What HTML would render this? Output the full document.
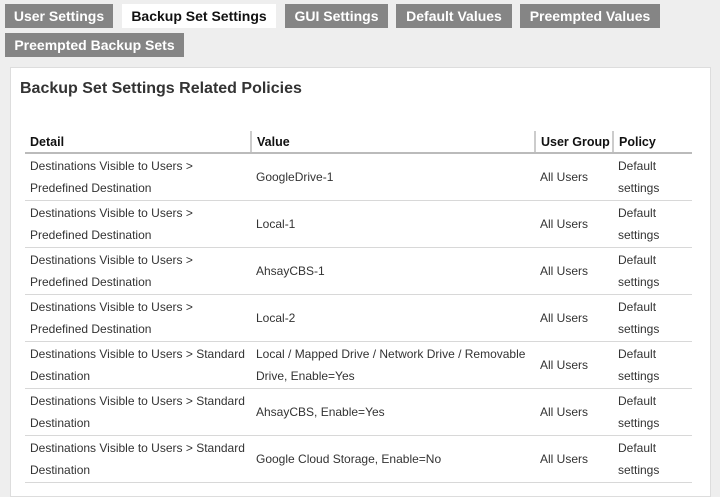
<!DOCTYPE html><html><head><style>
body{margin:0;width:720px;height:485px;overflow:hidden;background:#eee;font-family:"Liberation Sans",Arial,sans-serif;position:relative}
.t{position:absolute;height:24px;line-height:24px;background:#858585;color:#fff;font-weight:bold;font-size:14px;text-align:center}
.t.a{background:#fff;color:#111}
.p{position:absolute;left:10px;top:67px;width:701px;height:430px;background:#fff;border:1px solid #ddd;box-sizing:border-box}
h1{position:absolute;left:20px;top:80px;margin:0;font-size:16px;color:#333}
table{position:absolute;left:25px;top:131px;width:667px;border-collapse:collapse;font-size:12px;color:#333;table-layout:fixed}
th{text-align:left;font-size:12.5px;color:#111;height:21px;padding:0 5px;border-bottom:2px solid #bbb;vertical-align:middle;white-space:nowrap;line-height:14px}
th+th{border-left:2px solid #ccc}
td{height:46px;padding:0 5px;line-height:22px;border-bottom:1px solid #d8d8d8;vertical-align:middle;box-sizing:border-box}
tr.r{height:47px}
</style></head><body>
<div class="t" style="left:5px;top:4px;width:108px">User Settings</div>
<div class="t a" style="left:122px;top:4px;width:154px">Backup Set Settings</div>
<div class="t" style="left:285px;top:4px;width:103px">GUI Settings</div>
<div class="t" style="left:396px;top:4px;width:116px">Default Values</div>
<div class="t" style="left:520px;top:4px;width:140px">Preempted Values</div>
<div class="t" style="left:5px;top:33px;width:179px">Preempted Backup Sets</div>
<div class="p"></div>
<h1>Backup Set Settings Related Policies</h1>
<table>
<colgroup><col style="width:226px"><col style="width:284px"><col style="width:78px"><col style="width:79px"></colgroup>
<tr><th>Detail</th><th>Value</th><th>User Group</th><th>Policy</th></tr>
<tr class="r"><td>Destinations Visible to Users &gt;<br>Predefined Destination</td><td>GoogleDrive-1</td><td>All Users</td><td>Default<br>settings</td></tr>
<tr class="r"><td>Destinations Visible to Users &gt;<br>Predefined Destination</td><td>Local-1</td><td>All Users</td><td>Default<br>settings</td></tr>
<tr class="r"><td>Destinations Visible to Users &gt;<br>Predefined Destination</td><td>AhsayCBS-1</td><td>All Users</td><td>Default<br>settings</td></tr>
<tr class="r"><td>Destinations Visible to Users &gt;<br>Predefined Destination</td><td>Local-2</td><td>All Users</td><td>Default<br>settings</td></tr>
<tr class="r"><td>Destinations Visible to Users &gt; Standard<br>Destination</td><td>Local / Mapped Drive / Network Drive / Removable<br>Drive, Enable=Yes</td><td>All Users</td><td>Default<br>settings</td></tr>
<tr class="r"><td>Destinations Visible to Users &gt; Standard<br>Destination</td><td>AhsayCBS, Enable=Yes</td><td>All Users</td><td>Default<br>settings</td></tr>
<tr class="r"><td>Destinations Visible to Users &gt; Standard<br>Destination</td><td>Google Cloud Storage, Enable=No</td><td>All Users</td><td>Default<br>settings</td></tr>
</table>
</body></html>
